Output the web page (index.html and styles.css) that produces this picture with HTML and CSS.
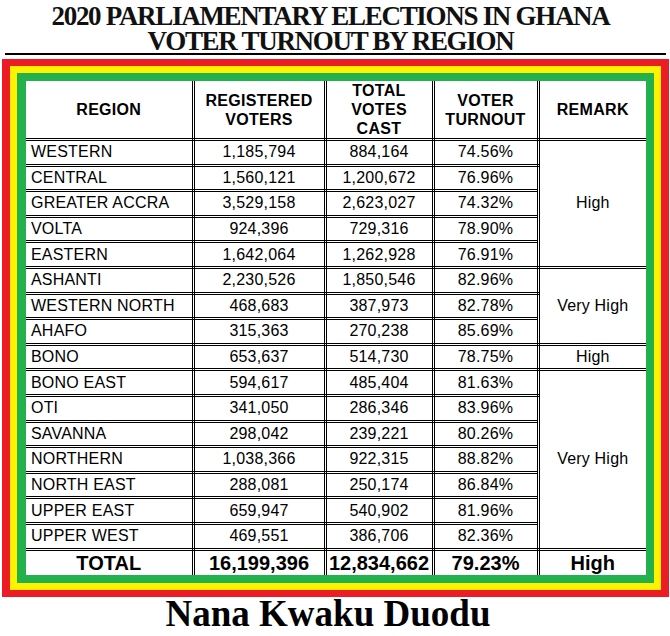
FILE: index.html
```html
<!DOCTYPE html>
<html>
<head>
<meta charset="utf-8">
<link rel="stylesheet" href="styles.css">
</head>
<body>
<div class="page">
  <h1 class="title"><span class="tline">2020 PARLIAMENTARY ELECTIONS IN GHANA</span><span class="tline">VOTER TURNOUT BY REGION</span></h1>
  <div class="frame-red">
    <div class="frame-yellow">
      <div class="frame-green">
        <table class="results">
          <colgroup>
            <col class="c1"><col class="c2"><col class="c3"><col class="c4"><col class="c5">
          </colgroup>
          <thead>
            <tr class="head">
              <th>REGION</th>
              <th>REGISTERED<br>VOTERS</th>
              <th>TOTAL<br>VOTES<br>CAST</th>
              <th>VOTER<br>TURNOUT</th>
              <th>REMARK</th>
            </tr>
          </thead>
          <tbody>
            <tr><td class="reg">WESTERN</td><td>1,185,794</td><td>884,164</td><td>74.56%</td><td class="remark" rowspan="5">High</td></tr>
            <tr><td class="reg">CENTRAL</td><td>1,560,121</td><td>1,200,672</td><td>76.96%</td></tr>
            <tr><td class="reg">GREATER ACCRA</td><td>3,529,158</td><td>2,623,027</td><td>74.32%</td></tr>
            <tr><td class="reg">VOLTA</td><td>924,396</td><td>729,316</td><td>78.90%</td></tr>
            <tr><td class="reg">EASTERN</td><td>1,642,064</td><td>1,262,928</td><td>76.91%</td></tr>
            <tr><td class="reg">ASHANTI</td><td>2,230,526</td><td>1,850,546</td><td>82.96%</td><td class="remark" rowspan="3">Very High</td></tr>
            <tr><td class="reg">WESTERN NORTH</td><td>468,683</td><td>387,973</td><td>82.78%</td></tr>
            <tr><td class="reg">AHAFO</td><td>315,363</td><td>270,238</td><td>85.69%</td></tr>
            <tr><td class="reg">BONO</td><td>653,637</td><td>514,730</td><td>78.75%</td><td class="remark">High</td></tr>
            <tr><td class="reg">BONO EAST</td><td>594,617</td><td>485,404</td><td>81.63%</td><td class="remark" rowspan="7">Very High</td></tr>
            <tr><td class="reg">OTI</td><td>341,050</td><td>286,346</td><td>83.96%</td></tr>
            <tr><td class="reg">SAVANNA</td><td>298,042</td><td>239,221</td><td>80.26%</td></tr>
            <tr><td class="reg">NORTHERN</td><td>1,038,366</td><td>922,315</td><td>88.82%</td></tr>
            <tr><td class="reg">NORTH EAST</td><td>288,081</td><td>250,174</td><td>86.84%</td></tr>
            <tr><td class="reg">UPPER EAST</td><td>659,947</td><td>540,902</td><td>81.96%</td></tr>
            <tr><td class="reg">UPPER WEST</td><td>469,551</td><td>386,706</td><td>82.36%</td></tr>
          </tbody>
          <tfoot>
            <tr class="total">
              <td>TOTAL</td><td>16,199,396</td><td>12,834,662</td><td>79.23%</td><td>High</td>
            </tr>
          </tfoot>
        </table>
      </div>
    </div>
  </div>
  <div class="author">Nana Kwaku Duodu</div>
</div>
</body>
</html>
```

FILE: styles.css
```css
html, body {
  margin: 0;
  padding: 0;
  background: #ffffff;
}

.page {
  width: 670px;
  height: 636px;
  overflow: hidden;
  display: flex;
  flex-direction: column;
}

.title {
  margin: 0 4px 0 5px;
  padding: 4px 10px 0 0;
  height: 49px;
  display: flex;
  flex-direction: column;
  align-items: center;
  justify-content: space-between;
  font-family: "Liberation Serif", "Times New Roman", serif;
  font-weight: bold;
  font-size: 27px;
  line-height: 24px;
  letter-spacing: -1.3px;
  color: #111;
  border-bottom: 2px solid #000;
}

.tline {
  display: block;
  height: 24px;
  white-space: nowrap;
}

.frame-red {
  margin: 4px 1px 0 2px;
  border: 7px solid #ed1c24;
  border-left-width: 8px;
  border-right-width: 8px;
}

.frame-yellow {
  border: 7px solid #fff200;
}

.frame-green {
  border: 8px solid #22b14c;
  border-left-width: 9px;
  background: #fff;
}

.results {
  width: 620px;
  table-layout: fixed;
  border-collapse: collapse;
  font-family: "Liberation Sans", Arial, sans-serif;
  color: #000;
}

.c1 { width: 167px; }
.c2 { width: 132px; }
.c3 { width: 108px; }
.c4 { width: 105px; }
.c5 { width: 108px; }

.results th,
.results td {
  border: 3px double #000;
  padding: 0;
  text-align: center;
  vertical-align: middle;
  overflow: hidden;
  white-space: nowrap;
}

.results tr:first-child th { border-top: none; }
.results tr th:first-child,
.results tr td:first-child { border-left: none; }
.results tr th:last-child,
.results tr td.remark,
.results tr.total td:last-child { border-right: none; }
.results tr.total td { border-bottom: none; }

.results th {
  font-size: 16px;
  font-weight: bold;
  line-height: 19px;
  letter-spacing: 0.3px;
  height: 55px;
}

.results td {
  font-size: 16px;
  line-height: 18px;
  height: 22.6px;
  letter-spacing: 0.2px;
}

.results td.reg {
  text-align: left;
  padding-left: 5px;
}

.results tr.total td {
  font-size: 20px;
  font-weight: bold;
  height: 24px;
  letter-spacing: 0;
  line-height: 22px;
}

.author {
  margin-top: 2px;
  padding-right: 14px;
  font-family: "Liberation Serif", "Times New Roman", serif;
  font-weight: bold;
  font-size: 37px;
  line-height: 30px;
  text-align: center;
  color: #000;
}
```
